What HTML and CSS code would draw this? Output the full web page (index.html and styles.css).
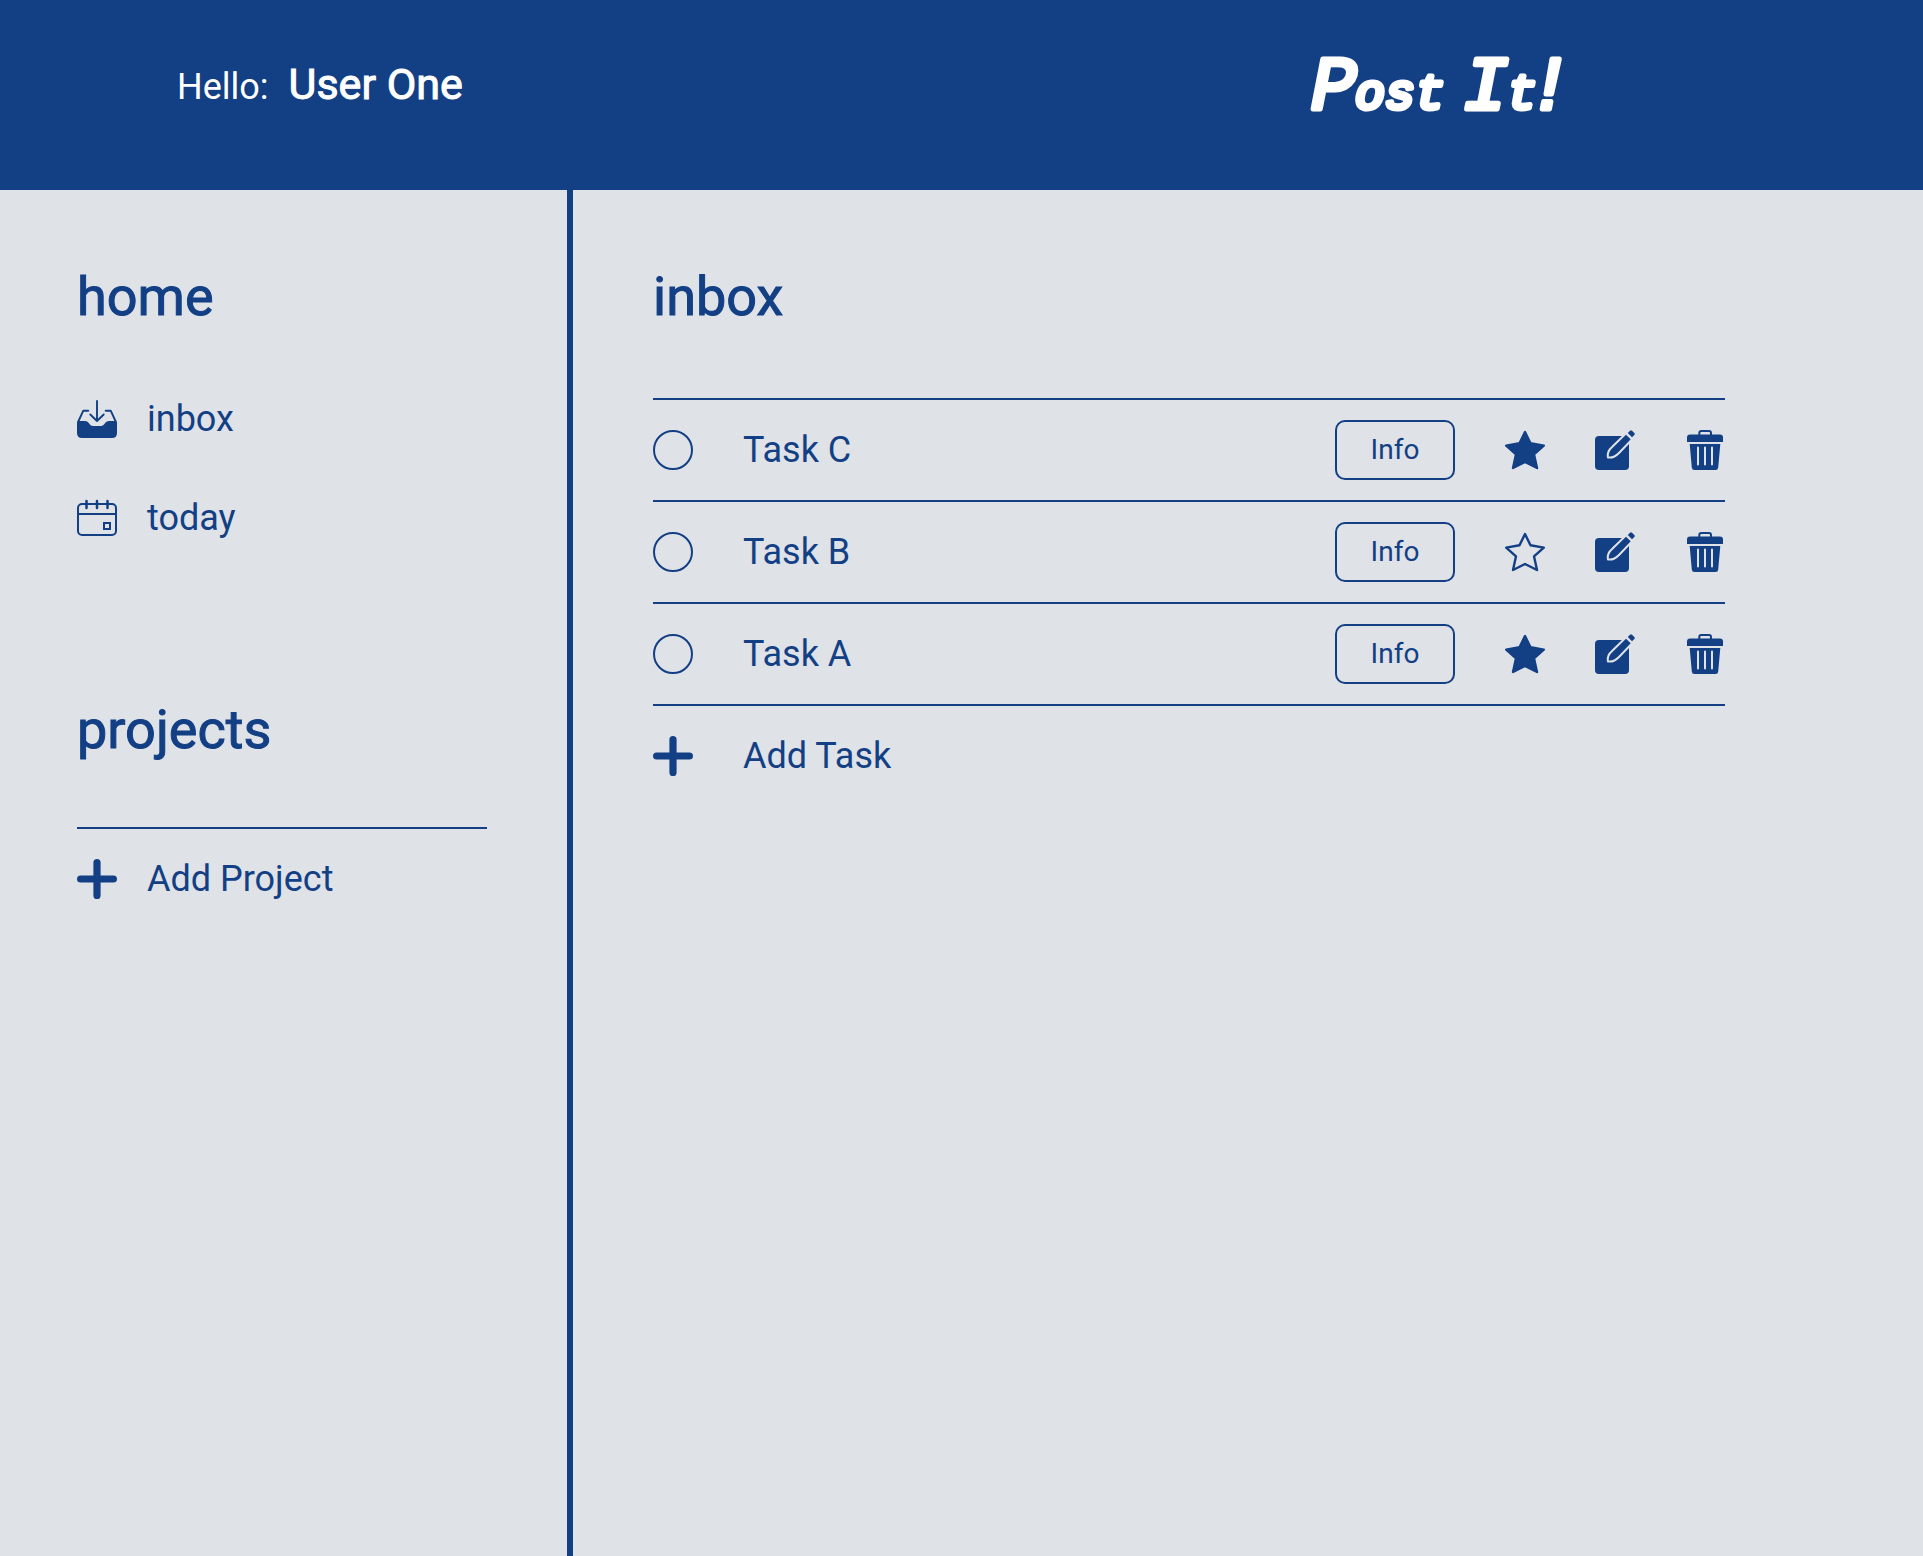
FILE: index.html
```html
<!DOCTYPE html>
<html lang="en">
<head>
<meta charset="utf-8">
<title>Post It!</title>
<link rel="stylesheet" href="styles.css">
</head>
<body>
<svg class="sprite" aria-hidden="true">
  <symbol id="inbox" viewBox="0 -1 40 40">
    <path d="M0 22.500Q0 21 1.500 21H8C12 21 12.500 26 16 26H24C27.500 26 28 21 32 21H38.500Q40 21 40 22.500V33Q40 38 35 38H5Q0 38 0 33Z" fill="currentColor"/>
    <path d="M1.300 21.500L6.300 10.700H11.300M38.700 21.500L33.700 10.700H28.700M20 1V21M13.300 14.500L20 21L26.700 14.500" fill="none" stroke="currentColor" stroke-width="1.900" stroke-linecap="round" stroke-linejoin="round"/>
  </symbol>
  <symbol id="calendar" viewBox="0 0 40 40">
    <g fill="none" stroke="currentColor" stroke-width="2">
      <rect x="1" y="6" width="38" height="31" rx="4"/>
      <path d="M1 16H39"/>
      <path d="M9.500 3V10M20 3V10M30.500 3V10" stroke-width="2.500" stroke-linecap="round"/>
      <rect x="27" y="25" width="6" height="6"/>
    </g>
  </symbol>
  <symbol id="plus" viewBox="0 0 40 40">
    <path d="M20 3.600V36.400M3.600 20H36.400" stroke="currentColor" stroke-width="7.200" stroke-linecap="round"/>
  </symbol>
  <symbol id="star" viewBox="0 0 40 40">
    <path d="M20 2L25.500 13.300L38.800 15.600L29 24.300L32 38L20 32L8 38L11 24.300L1.200 15.600L14.500 13.300Z" stroke="currentColor" stroke-width="2.400" stroke-linejoin="round"/>
  </symbol>
  <symbol id="edit" viewBox="0 0 40 40">
    <path d="M4 6H34V36Q34 40 30 40H4Q0 40 0 36V10Q0 6 4 6Z" fill="currentColor"/>
    <path d="M31 4.700L35.700 9.300L23.500 22C20 25.500 16.500 27 13.800 26.500C13.300 23.500 15 20 18 17.500Z" fill="currentColor" class="cutout"/>
    <path d="M32.800 3L35 .8Q36 -.2 37 .8L39.300 3Q40.200 4 39.300 5L37 7.200Z" fill="currentColor"/>
  </symbol>
  <symbol id="trash" viewBox="0 0 40 40">
    <path d="M14.300 5V3Q14.300 1 16.300 1H24Q26 1 26 3V5" fill="none" stroke="currentColor" stroke-width="2"/>
    <path d="M5 4.500H35Q38 4.500 38 7.500V12H2V7.500Q2 4.500 5 4.500Z" fill="currentColor"/>
    <path d="M4.700 14H35.300L33.200 37.500Q33 40 30.500 40H9.500Q7 40 6.800 37.500Z" fill="currentColor"/>
    <path d="M13 17.500V34.500M20 17.500V34.500M27 17.500V34.500" class="slots"/>
  </symbol>
</svg>

<header class="header">
  <p class="greeting">Hello: <strong class="user">User One</strong></p>
  <svg class="logo" viewBox="0 0 270 80" role="img" aria-label="Post It!">
    <text y="64"><tspan class="logo-cap" x="-4">P</tspan><tspan x="40">ost</tspan> <tspan class="logo-cap" x="148">I</tspan><tspan x="192">t</tspan><tspan class="logo-cap" x="212">!</tspan></text>
  </svg>
</header>

<div class="layout">
  <aside class="sidebar">
    <section>
      <h2 class="title">home</h2>
      <nav class="nav">
        <a class="nav-link" href="#inbox-list"><svg class="icon"><use href="#inbox"/></svg>inbox</a>
        <a class="nav-link" href="#today-list"><svg class="icon"><use href="#calendar"/></svg>today</a>
      </nav>
    </section>
    <section class="projects">
      <h2 class="title">projects</h2>
      <button class="add add-project" type="button"><svg class="icon"><use href="#plus"/></svg>Add Project</button>
    </section>
  </aside>

  <main class="main">
    <h2 class="title">inbox</h2>
    <ul class="tasks">
      <li class="task">
        <input class="check" type="checkbox" id="task-c">
        <label class="task-name" for="task-c">Task C</label>
        <button class="info" type="button">Info</button>
        <button class="icon-button starred" type="button" aria-label="Unstar"><svg class="icon"><use href="#star"/></svg></button>
        <button class="icon-button" type="button" aria-label="Edit"><svg class="icon"><use href="#edit"/></svg></button>
        <button class="icon-button" type="button" aria-label="Delete"><svg class="icon"><use href="#trash"/></svg></button>
      </li>
      <li class="task">
        <input class="check" type="checkbox" id="task-b">
        <label class="task-name" for="task-b">Task B</label>
        <button class="info" type="button">Info</button>
        <button class="icon-button" type="button" aria-label="Star"><svg class="icon"><use href="#star"/></svg></button>
        <button class="icon-button" type="button" aria-label="Edit"><svg class="icon"><use href="#edit"/></svg></button>
        <button class="icon-button" type="button" aria-label="Delete"><svg class="icon"><use href="#trash"/></svg></button>
      </li>
      <li class="task">
        <input class="check" type="checkbox" id="task-a">
        <label class="task-name" for="task-a">Task A</label>
        <button class="info" type="button">Info</button>
        <button class="icon-button starred" type="button" aria-label="Unstar"><svg class="icon"><use href="#star"/></svg></button>
        <button class="icon-button" type="button" aria-label="Edit"><svg class="icon"><use href="#edit"/></svg></button>
        <button class="icon-button" type="button" aria-label="Delete"><svg class="icon"><use href="#trash"/></svg></button>
      </li>
    </ul>
    <button class="add add-task" type="button"><svg class="icon"><use href="#plus"/></svg>Add Task</button>
  </main>
</div>
</body>
</html>
```

FILE: styles.css
```css
:root {
  --blue: #133f85;
  --paper: #dfe2e7;
}

* {
  box-sizing: border-box;
}

body {
  display: flex;
  flex-direction: column;
  min-height: 100vh;
  margin: 0;
  background: var(--paper);
  color: var(--blue);
  font: 36px/42px Roboto, "Liberation Sans", sans-serif;
}

button {
  padding: 0;
  border: 0;
  background: none;
  color: inherit;
  font: inherit;
  cursor: pointer;
}

.sprite {
  position: absolute;
  width: 0;
  height: 0;
}

.icon {
  display: block;
  flex: none;
  width: 40px;
  height: 40px;
  fill: none;
}

.cutout {
  stroke: var(--paper);
  stroke-width: 4px;
  paint-order: stroke;
}

.slots {
  stroke: var(--paper);
  stroke-width: 2px;
  stroke-linecap: round;
}

/* Header */
.header {
  display: flex;
  align-items: center;
  justify-content: space-between;
  height: 190px;
  padding: 0 338px 20px 177px;
  background: var(--blue);
  color: #fff;
}

.greeting {
  display: flex;
  align-items: baseline;
  gap: 20px;
  margin: 0;
}

.user {
  font-size: 43px;
  font-weight: 400;
  -webkit-text-stroke: 1px currentColor;
}

.logo {
  width: 270px;
  height: 80px;
  overflow: visible;
  fill: #fff;
  stroke: #fff;
  stroke-width: 5px;
  stroke-linejoin: round;
  font: italic 400 50px "Liberation Mono", monospace;
}

.logo-cap {
  font-size: 76px;
}

/* Columns */
.layout {
  display: flex;
  flex: 1;
}

.sidebar {
  flex: none;
  width: 573px;
  padding: 75px 80px 75px 77px;
  border-right: 6px solid var(--blue);
}

.main {
  flex: 1;
  padding: 75px 198px 75px 80px;
}

.title {
  margin: 0 0 69px;
  font-size: 54px;
  font-weight: 400;
  line-height: 64px;
  -webkit-text-stroke: 1px currentColor;
}

.nav {
  display: flex;
  flex-direction: column;
  gap: 57px;
}

.nav-link {
  display: flex;
  align-items: center;
  gap: 30px;
  color: inherit;
  text-decoration: none;
}

.projects {
  margin-top: 159px;
}

.projects .title {
  margin-bottom: 65px;
}

.add {
  display: flex;
  align-items: center;
  width: 100%;
  height: 102px;
}

.add-project {
  gap: 30px;
  border-top: 2px solid var(--blue);
}

.add-task {
  gap: 50px;
  border-top: 2px solid var(--blue);
}

/* Tasks */
.tasks {
  margin: 0;
  padding: 0;
  list-style: none;
}

.task {
  display: flex;
  align-items: center;
  gap: 50px;
  height: 102px;
  border-top: 2px solid var(--blue);
}

.check {
  appearance: none;
  width: 40px;
  height: 40px;
  margin: 0;
  border: 2px solid var(--blue);
  border-radius: 50%;
}

.check:checked {
  background: var(--blue);
}

.task-name {
  flex: 1;
}

.info {
  width: 120px;
  height: 60px;
  border: 2px solid var(--blue);
  border-radius: 10px;
  font-size: 28px;
  line-height: 32px;
}

.starred .icon {
  fill: currentColor;
}
```
